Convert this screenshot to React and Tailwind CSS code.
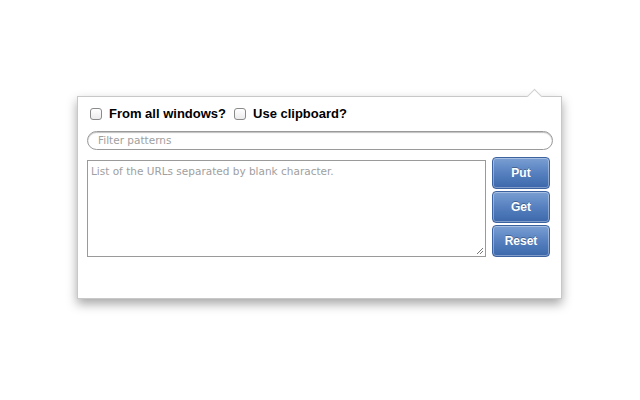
export default function App() {
  const btn =
    "w-[58px] h-[32px] rounded-[4px] border border-[#3d62a0] bg-gradient-to-b from-[#7a9fd3] via-[#5680bf] to-[#3c68ab] text-white font-bold text-[12px] shadow-[inset_0_0_0_1px_rgba(255,255,255,0.35)] [text-shadow:0_-1px_0_rgba(0,0,0,0.3)] flex items-center justify-center";
  return (
    <div className="w-[640px] h-[400px] bg-white overflow-hidden" style={{ fontFamily: '"Liberation Sans", Arial, sans-serif' }}>
      <div className="relative ml-[77px] mt-[96px] w-[485px] h-[203px] bg-white border border-[#c8c8c8] shadow-[0_5px_10px_rgba(0,0,0,0.35)]">
        <div className="absolute -top-[6px] right-[21px] w-[11px] h-[11px] bg-white border-l border-t border-[#d0d0d0] rotate-45" />
        <div className="pl-[12px] pr-[9px] pt-[9px] flex flex-col">
          <div className="flex items-center h-[16px] text-[13px] font-bold text-black">
            <span className="w-[12px] h-[12px] rounded-[3px] border border-[#8a8a8a] bg-gradient-to-b from-white to-[#ececec] mr-[7px]" />
            <span>From all windows?</span>
            <span className="w-[12px] h-[12px] rounded-[3px] border border-[#8a8a8a] bg-gradient-to-b from-white to-[#ececec] ml-[8px] mr-[7px]" />
            <span>Use clipboard?</span>
          </div>
          <div className="mt-[9px] -ml-[3px] h-[19px] w-[466px] rounded-full border border-[#9a9a9a] shadow-[inset_0_1px_1px_rgba(0,0,0,0.25)] flex items-center pl-[10px] text-[#a0a0a0]" style={{ fontFamily: '"DejaVu Sans", sans-serif', fontSize: "10.5px" }}>
            Filter patterns
          </div>
          <div className="mt-[7px] -ml-[3px] flex gap-[6px]">
            <div className="relative w-[399px] h-[97px] mt-[3px] border border-[#9a9a9a] pl-[3px] pt-[3px] text-[#a0a0a0]" style={{ fontFamily: '"DejaVu Sans", sans-serif', fontSize: "10.5px" }}>
              List of the URLs separated by blank character.
              <svg className="absolute right-[1px] bottom-[1px]" width="8" height="8" viewBox="0 0 8 8">
                <path d="M7 1 L1 7 M7 4 L4 7" stroke="#777" strokeWidth="1" />
              </svg>
            </div>
            <div className="flex flex-col gap-[2px]">
              <div className={btn}>Put</div>
              <div className={btn}>Get</div>
              <div className={btn}>Reset</div>
            </div>
          </div>
        </div>
      </div>
    </div>
  );
}
